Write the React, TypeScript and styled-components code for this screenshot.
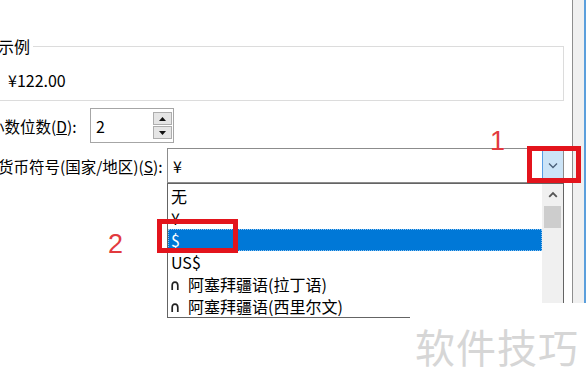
import React from "react";
import styled, { createGlobalStyle } from "styled-components";

const GlobalStyle = createGlobalStyle`
  html, body {
    margin: 0;
    padding: 0;
    background: #fff;
  }
  body {
    font-family: "Noto Sans CJK SC", "Noto Sans", sans-serif;
  }
  * {
    box-sizing: border-box;
  }
`;

const Screen = styled.div`
  position: relative;
  display: flex;
  width: 586px;
  height: 391px;
  overflow: hidden;
  background: #fff;
  color: #000;
  font-size: 16px;
  line-height: 20px;
`;

const Dialog = styled.div`
  flex: 1;
  display: flex;
  flex-direction: column;
  margin-left: -5px;
  padding: 37px 8px 0 0;
`;

const WindowEdge = styled.div`
  flex: none;
  width: 14px;
  border-left: 1px solid #8e8e8e;
  border-right: 2px solid #5b9fdc;
  background: #f0f0f0;
`;

const Group = styled.fieldset`
  margin: 0 0 0 -7px;
  padding: 0;
  min-width: 0;
  border: 1px solid #dcdcdc;
`;

const Legend = styled.legend`
  margin-left: 6px;
  padding: 0 3px;
  line-height: 18px;
`;

const Sample = styled.div`
  padding: 15px 0 10px 19px;
  line-height: 20px;
`;

const Form = styled.div`
  display: flex;
  flex-direction: column;
  gap: 5px;
  margin-top: 7px;
`;

const Row = styled.div`
  display: flex;
  align-items: center;
`;

const Label = styled.div<{ $width: number; $indent: number }>`
  flex: none;
  width: ${(p) => p.$width}px;
  margin-left: ${(p) => p.$indent}px;
  font-size: 15.5px;
  white-space: nowrap;
`;

const SpinBox = styled.div`
  display: flex;
  align-items: center;
  justify-content: space-between;
  width: 84px;
  height: 35px;
  padding: 0 1px 0 5px;
  border: 1px solid #a6a6a6;
`;

const SpinButtons = styled.div`
  display: flex;
  flex-direction: column;
  gap: 1px;
`;

const SpinButton = styled.div`
  display: flex;
  align-items: center;
  justify-content: center;
  width: 19px;
  height: 13px;
  border: 1px solid #adadad;
  background: #e5e5e5;
`;

const ComboWrap = styled.div`
  position: relative;
  flex: 1;
`;

const Combo = styled.div`
  display: flex;
  align-items: stretch;
  height: 35px;
  border: 1px solid #8c8c8c;
`;

const ComboValue = styled.div`
  flex: 1;
  display: flex;
  align-items: center;
  padding-left: 5px;
`;

const DropButton = styled.div`
  flex: none;
  display: flex;
  align-items: center;
  justify-content: center;
  width: 21px;
  border-left: 1px solid #569de5;
  background: #cce4f7;
`;

const DropList = styled.div`
  position: absolute;
  top: 100%;
  left: 0;
  right: 0;
  height: 135px;
  display: flex;
  border: 1px solid #646464;
  background: #fff;
  overflow: hidden;
`;

const Items = styled.div`
  flex: 1;
  padding-top: 1px;
`;

const Item = styled.div<{ $selected?: boolean }>`
  display: flex;
  align-items: center;
  height: 22px;
  padding-left: 3px;
  white-space: nowrap;
  background: ${(p) => (p.$selected ? "#0078d7" : "transparent")};
  color: ${(p) => (p.$selected ? "#fff" : "#000")};
  outline: ${(p) => (p.$selected ? "1px dotted #8cc2f0" : "none")};
  outline-offset: -1px;
`;

const LangMark = styled.svg`
  flex: none;
  margin: 2px 9px 0 0;
`;

const ScrollBar = styled.div`
  flex: none;
  width: 21px;
  display: flex;
  flex-direction: column;
  background: #f0f0f0;
`;

const ScrollArrow = styled.div`
  flex: none;
  display: flex;
  align-items: center;
  justify-content: center;
  height: 20px;
`;

const Thumb = styled.div`
  height: 22px;
  margin: 2px 2px 0;
  background: #cdcdcd;
`;

const Track = styled.div`
  flex: 1;
`;

const Marker = styled.div<{ $x: number; $y: number; $w: number; $h: number }>`
  position: absolute;
  left: ${(p) => p.$x}px;
  top: ${(p) => p.$y}px;
  width: ${(p) => p.$w}px;
  height: ${(p) => p.$h}px;
  border: 5px solid #e3141c;
`;

const StepNumber = styled.div<{ $x: number; $y: number }>`
  position: absolute;
  left: ${(p) => p.$x}px;
  top: ${(p) => p.$y}px;
  font-family: "Liberation Sans", Arial, sans-serif;
  font-size: 27px;
  line-height: 30px;
  color: #e23a3e;
`;

const Watermark = styled.div`
  position: absolute;
  left: 410px;
  top: 303px;
  right: 0;
  bottom: 0;
  padding: 20px 0 0 5px;
  background: #fff;
  color: #d6d6d6;
  font-size: 40px;
  line-height: 46px;
  letter-spacing: 1px;
  white-space: nowrap;
`;

const ChevronDown = () => (
  <svg width="10" height="7" viewBox="0 0 10 7">
    <path d="M1 1.5 L5 5.5 L9 1.5" fill="none" stroke="#4a5f78" strokeWidth="1.3" />
  </svg>
);

const ChevronUp = () => (
  <svg width="10" height="7" viewBox="0 0 10 7">
    <path d="M1.2 5.8 L5 2 L8.8 5.8" fill="none" stroke="#555" strokeWidth="1.8" />
  </svg>
);

const Triangle = ({ up }: { up?: boolean }) => (
  <svg width="7" height="4" viewBox="0 0 7 4">
    <polygon points={up ? "0,4 3.5,0 7,4" : "0,0 7,0 3.5,4"} fill="#111" />
  </svg>
);

const currencies = [
  { label: "无" },
  { label: "¥" },
  { label: "$", selected: true },
  { label: "US$" },
  { label: "阿塞拜疆语(拉丁语)", lang: true },
  { label: "阿塞拜疆语(西里尔文)", lang: true },
];

export default function App() {
  return (
    <>
      <GlobalStyle />
      <Screen>
        <Dialog>
          <Group>
            <Legend>示例</Legend>
            <Sample>¥122.00</Sample>
          </Group>
          <Form>
            <Row>
              <Label $width={101} $indent={-6}>
                小数位数(<u>D</u>):
              </Label>
              <SpinBox>
                <span>2</span>
                <SpinButtons>
                  <SpinButton>
                    <Triangle up />
                  </SpinButton>
                  <SpinButton>
                    <Triangle />
                  </SpinButton>
                </SpinButtons>
              </SpinBox>
            </Row>
            <Row>
              <Label $width={169} $indent={3}>
                货币符号(国家/地区)(<u>S</u>):
              </Label>
              <ComboWrap>
                <Combo>
                  <ComboValue>¥</ComboValue>
                  <DropButton>
                    <ChevronDown />
                  </DropButton>
                </Combo>
                <DropList>
                  <Items>
                    {currencies.map((c) => (
                      <Item key={c.label} $selected={c.selected}>
                        {c.lang && (
                          <LangMark width="8" height="9" viewBox="0 0 8 9">
                            <path
                              d="M1.2 9 V4.5 Q1.2 1.2 4 1.2 Q6.8 1.2 6.8 4.5 V9"
                              fill="none"
                              stroke="#222"
                              strokeWidth="1.7"
                            />
                          </LangMark>
                        )}
                        {c.label}
                      </Item>
                    ))}
                  </Items>
                  <ScrollBar>
                    <ScrollArrow>
                      <ChevronUp />
                    </ScrollArrow>
                    <Thumb />
                    <Track />
                  </ScrollBar>
                </DropList>
              </ComboWrap>
            </Row>
          </Form>
        </Dialog>
        <WindowEdge />
        <Marker $x={527} $y={146} $w={54} $h={37} />
        <Marker $x={157} $y={219} $w={81} $h={34} />
        <StepNumber $x={490} $y={126}>1</StepNumber>
        <StepNumber $x={108} $y={229}>2</StepNumber>
        <Watermark>软件技巧</Watermark>
      </Screen>
    </>
  );
}
